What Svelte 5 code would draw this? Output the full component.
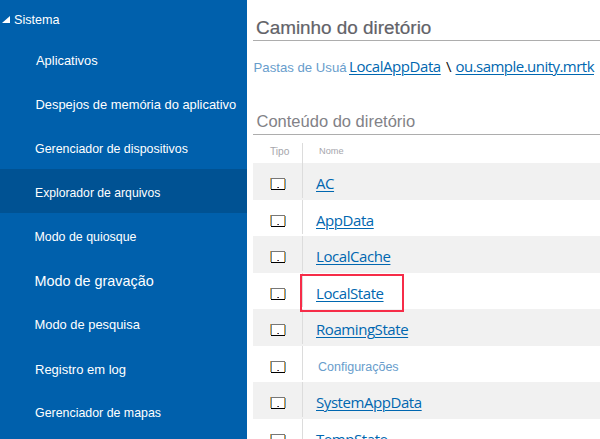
<script>
  const nav = [
    { label: 'Aplicativos', size: 12.9, x: 36, dy: 0 },
    { label: 'Despejos de memória do aplicativo', size: 12.9, x: 35.5, dy: 0 },
    { label: 'Gerenciador de dispositivos', size: 12.4, x: 35, dy: 1 },
    { label: 'Explorador de arquivos', size: 12.2, x: 35, dy: 1, active: true },
    { label: 'Modo de quiosque', size: 12.4, x: 34.5, dy: 1 },
    { label: 'Modo de gravação', size: 14.4, x: 34.5, dy: 1 },
    { label: 'Modo de pesquisa', size: 12.9, x: 34.5, dy: 0 },
    { label: 'Registro em log', size: 13, x: 35, dy: 1 },
    { label: 'Gerenciador de mapas', size: 12.4, x: 35, dy: 1 },
  ];
  const rows = [
    { name: 'AC' },
    { name: 'AppData' },
    { name: 'LocalCache' },
    { name: 'LocalState', marked: true },
    { name: 'RoamingState' },
    { name: 'Configurações', plain: true },
    { name: 'SystemAppData' },
    { name: 'TempState' },
  ];
</script>

<div class="page">
  <nav>
    <div class="group">
      <svg width="8" height="7" viewBox="0 0 8 7"><path d="M8 0V7H0Z" fill="#fff" /></svg>
      <span>Sistema</span>
    </div>
    {#each nav as item}
      <div
        class="item"
        class:active={item.active}
        style="font-size:{item.size}px;padding-left:{item.x}px;padding-top:{3 + item.dy}px"
      >{item.label}</div>
    {/each}
  </nav>

  <main>
    <h1>Caminho do diretório</h1>
    <div class="path">
      <span class="root">Pastas de Usuá</span>
      <span class="link first">LocalAppData</span>
      <span class="sep">\</span>
      <span class="link second">ou.sample.unity.mrtk</span>
    </div>
    <h2>Conteúdo do diretório</h2>
    <div class="table">
      <div class="head">
        <div class="type">Tipo</div>
        <div class="name">Nome</div>
      </div>
      {#each rows as row}
        <div class="row">
          <div class="type">
            <svg width="16" height="12" viewBox="0 0 16 12" shape-rendering="crispEdges">
              <rect x="1" y="1" width="14" height="10" fill="#fff" />
              <rect x="0" y="0" width="1" height="11" fill="#dfa24a" />
              <rect x="14" y="0" width="1" height="11" fill="#d9963c" />
              <rect x="1" y="0" width="14" height="1" fill="#777" />
              <rect x="1" y="1" width="1" height="10" fill="#5f92bd" />
              <rect x="15" y="1" width="1" height="10" fill="#5f9fd0" />
              <rect x="1" y="11" width="14" height="1" fill="#000" />
              <rect x="7" y="9" width="1" height="1" fill="#a46a30" />
              <rect x="8" y="9" width="1" height="1" fill="#20307a" />
            </svg>
          </div>
          <div class="name">
            {#if row.plain}
              <span class="plain">{row.name}</span>
            {:else}
              <span class="link">{row.name}</span>
            {/if}
            {#if row.marked}<i class="mark"></i>{/if}
          </div>
        </div>
      {/each}
    </div>
  </main>
</div>

<style>
  :global(body) { margin: 0; background: #fff; }
  .page {
    display: flex;
    width: 600px;
    height: 439px;
    overflow: hidden;
    font-family: "Liberation Sans", Arial, sans-serif;
    white-space: nowrap;
  }
  nav { flex: none; width: 247px; background: #0060ac; color: #fff; }
  .group {
    display: flex;
    align-items: center;
    gap: 4px;
    height: 37px;
    box-sizing: border-box;
    padding: 3px 0 0 2px;
    font-size: 12.6px;
  }
  .group svg { margin-top: -2px; }
  .item { box-sizing: border-box; height: 44px; line-height: 41px; }
  .active { background: #005293; }
  main { flex: 1; min-width: 0; padding-left: 6px; }
  h1, h2 { margin: 0; box-sizing: border-box; font-weight: 400; border-bottom: 1px solid #adadad; }
  h1 {
    height: 41px;
    padding: 17px 0 0 3px;
    font-size: 18.9px;
    line-height: 22px;
    color: #626268;
    -webkit-text-stroke: 0.2px #626268;
  }
  .path { display: flex; height: 62px; box-sizing: border-box; padding-top: 13px; line-height: 24px; }
  .root { width: 96px; padding-left: 0.5px; box-sizing: border-box; font-size: 13.2px; line-height: 27px; color: #689dcc; }
  .link {
    font-family: "Open Sans", "Noto Sans", sans-serif;
    font-size: 15px;
    letter-spacing: -0.43px;
    color: #0067b0;
    text-decoration: underline;
    text-decoration-thickness: 1px;
    text-underline-offset: 2px;
    text-decoration-skip-ink: auto;
  }
  .first { width: 97px; }
  .second { letter-spacing: -0.53px; }
  .sep { width: 9.5px; font-family: "Open Sans", sans-serif; font-size: 15px; color: #111; }
  h2 { height: 32px; padding: 8px 0 0 3.5px; font-size: 16.5px; line-height: 20px; color: #828287; }
  .head { display: flex; height: 28px; box-sizing: border-box; padding-top: 8px; color: #a6a6ac; line-height: 17px; }
  .type { flex: none; width: 50px; box-sizing: border-box; padding-left: 17px; border-right: 1px solid #dcdcdc; }
  .head .type { font-size: 10.2px; }
  .head .name { padding-left: 16px; font-size: 9.2px; line-height: 16px; }
  .row { display: flex; height: 36px; }
  .row:nth-child(even) { height: 37px; background: #f1f1f1; }
  .row .type { height: calc(100% - 2px); padding-top: 15px; }
  .row .type svg { display: block; }
  .row .name { position: relative; flex: 1; padding-left: 13px; line-height: 40px; }
  .plain { padding-left: 2px; font-size: 12.5px; line-height: 42px; color: #689dcc; }
  .mark {
    position: absolute;
    left: -3px;
    top: 1px;
    width: 104px;
    height: 38px;
    box-sizing: border-box;
    border: 2px solid #f62c48;
    z-index: 1;
  }
</style>
